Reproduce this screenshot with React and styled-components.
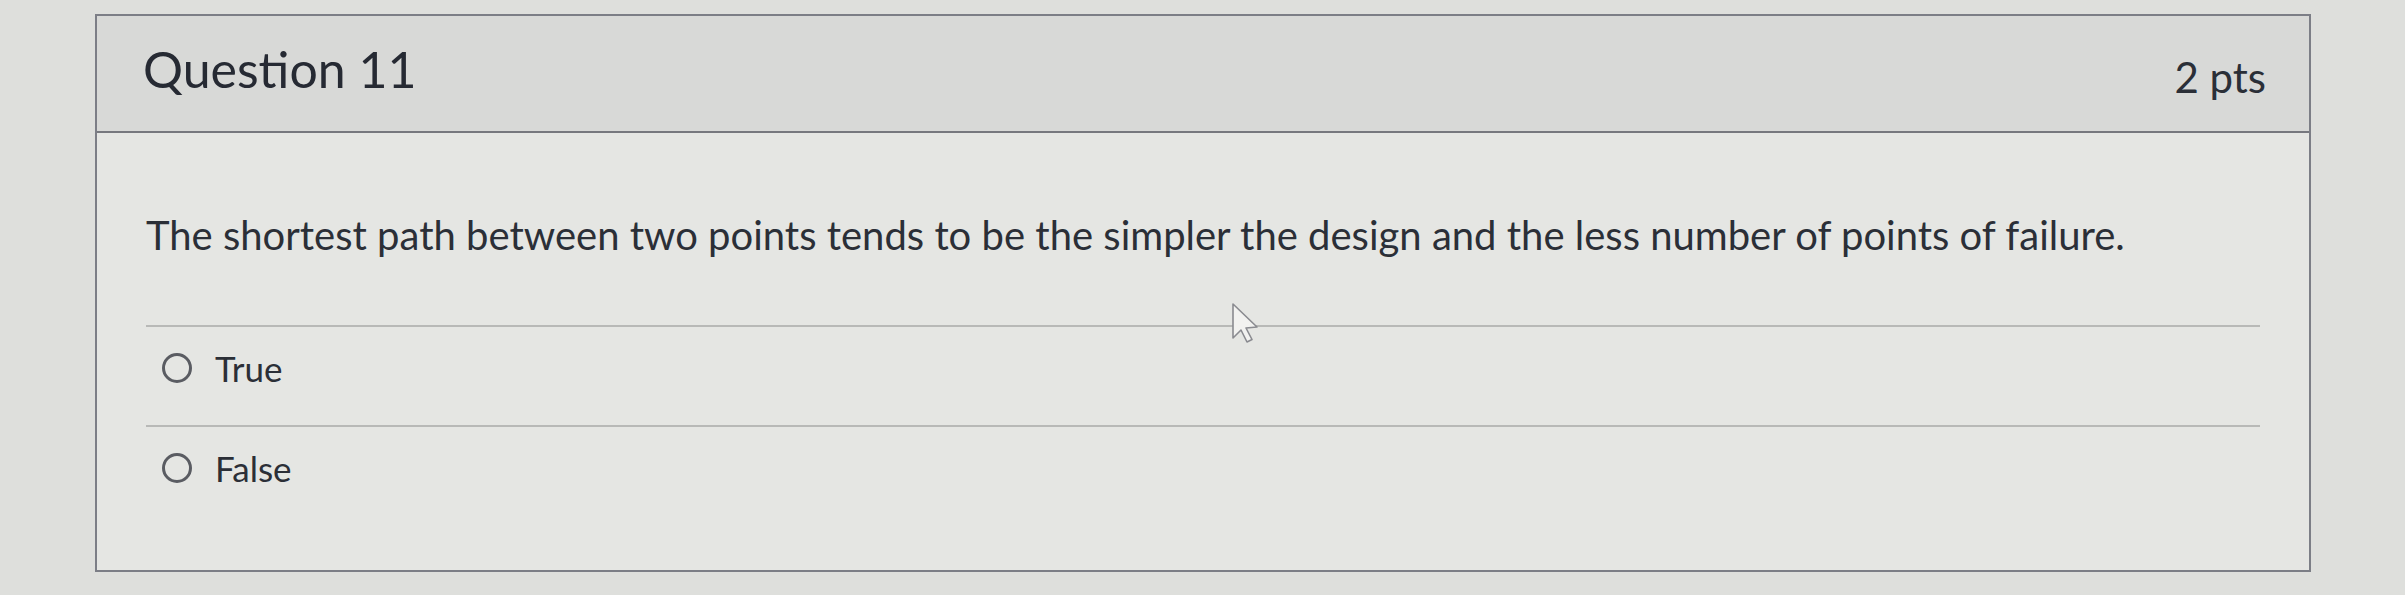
import React from 'react'
import styled, { createGlobalStyle } from 'styled-components'

const GlobalStyle = createGlobalStyle`
  html, body {
    margin: 0;
    padding: 0;
    background: #dedfdc;
  }
  body {
    font-family: Lato, "Open Sans", "Liberation Sans", sans-serif;
    color: #2b2f37;
  }
`

const Page = styled.div`
  padding: 14px 0 0 95px;
  height: 581px;
`

const Card = styled.div`
  position: relative;
  width: 2216px;
  height: 558px;
  box-sizing: border-box;
  border: 2px solid #7c7e86;
  background: #e5e6e3;
  display: flex;
  flex-direction: column;
`

const Header = styled.div`
  height: 117px;
  box-sizing: border-box;
  display: flex;
  align-items: center;
  justify-content: space-between;
  padding: 0 43px 0 46px;
  background: #d8d9d7;
  border-bottom: 2px solid #76787e;
`

const Title = styled.h2`
  margin: 0 0 10px 0;
  font-size: 50px;
  font-weight: 400;
  line-height: 1.2;
  color: #262a33;
`

const Points = styled.div`
  margin-top: 8px;
  font-size: 42px;
  line-height: 1.2;
  color: #2b2f37;
`

const Body = styled.div`
  padding: 78px 49px 0 49px;
`

const QuestionText = styled.p`
  margin: 0 0 66px 0;
  font-size: 40px;
  line-height: 1.2;
  color: #2b2f37;
`

const AnswerList = styled.div`
  display: flex;
  flex-direction: column;
`

const Answer = styled.label`
  display: flex;
  align-items: center;
  gap: 23px;
  padding: 20px 0 36px 16px;
  border-top: 2px solid #b8b9b7;
  font-size: 35px;
  line-height: 1.2;
  color: #2b2f37;
`

const Radio = styled.span`
  width: 30px;
  height: 30px;
  box-sizing: border-box;
  border-radius: 50%;
  border: 3px solid #5a5c62;
  flex: none;
`

const Pointer = styled.svg`
  position: absolute;
  left: ${p => p.$x}px;
  top: ${p => p.$y}px;
  pointer-events: none;
`

function App() {
  const answers = ['True', 'False']
  return (
    <>
      <GlobalStyle />
      <Page>
        <Card>
          <Header>
            <Title>Question 11</Title>
            <Points>2 pts</Points>
          </Header>
          <Body>
            <QuestionText>
              The shortest path between two points tends to be the simpler the design and the less number of points of failure.
            </QuestionText>
            <AnswerList>
              {answers.map(a => (
                <Answer key={a}>
                  <Radio />
                  {a}
                </Answer>
              ))}
            </AnswerList>
          </Body>
          <Pointer $x={1134} $y={286} width="28" height="42" viewBox="0 0 28 42">
            <path
              d="M2 2 L2 36 L10 28 L16 40 L21 37.5 L15 26 L26 25 Z"
              fill="#f2f2f0"
              stroke="#8a8b90"
              strokeWidth="1.6"
              strokeLinejoin="round"
            />
          </Pointer>
        </Card>
      </Page>
    </>
  )
}

export default App
